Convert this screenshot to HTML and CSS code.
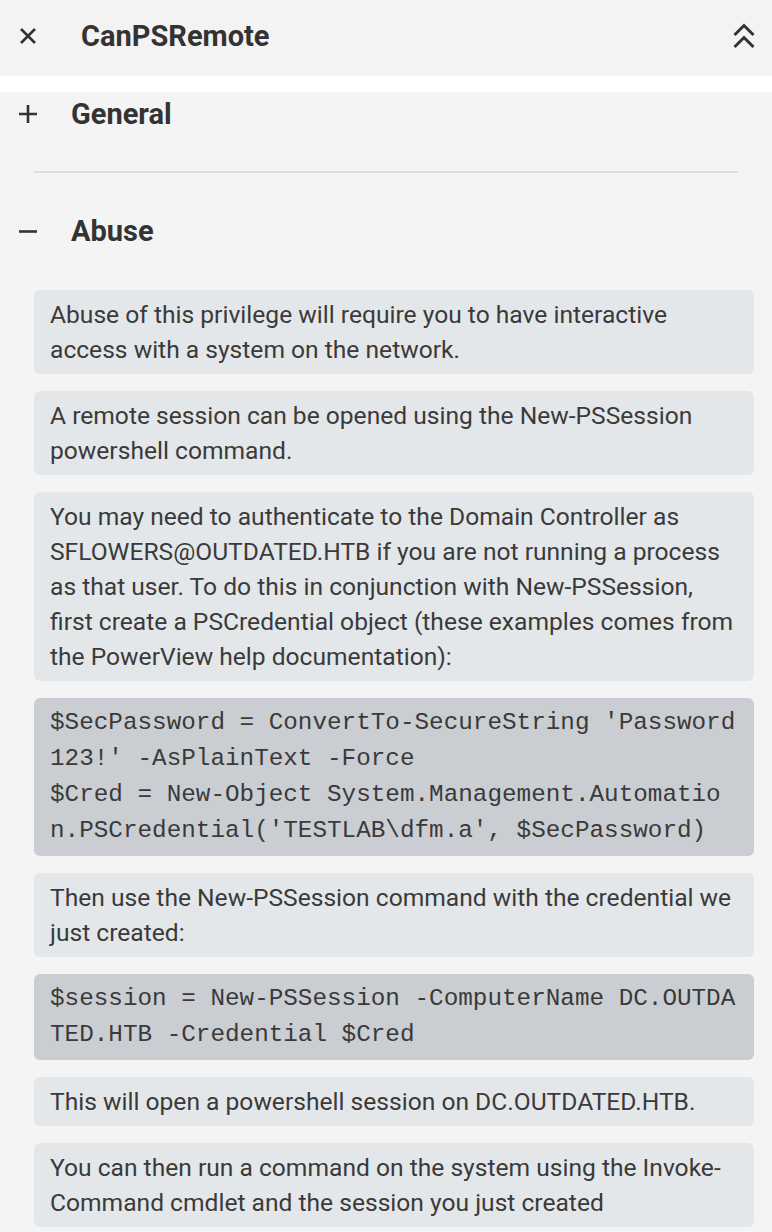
FILE: index.html
```html
<!DOCTYPE html>
<html lang="en">
<head>
<meta charset="utf-8">
<title>CanPSRemote</title>
<link rel="stylesheet" href="styles.css">
</head>
<body>
<header class="topbar">
  <svg class="icon icon-close" width="20" height="20" viewBox="0 0 20 20" aria-hidden="true">
    <path d="M3 3 L17 17 M17 3 L3 17" stroke="#333" stroke-width="2.6" fill="none" stroke-linecap="butt"/>
  </svg>
  <h1 class="title">CanPSRemote</h1>
  <svg class="icon icon-collapse" width="24" height="28" viewBox="0 0 24 28" aria-hidden="true">
    <path d="M2.5 13 L12 3.5 L21.5 13 M2.5 25 L12 15.5 L21.5 25" stroke="#333" stroke-width="3" fill="none"/>
  </svg>
</header>
<div class="gap-band"></div>
<main class="content">
  <div class="section-row">
    <svg class="icon icon-toggle" width="20" height="20" viewBox="0 0 20 20" aria-hidden="true">
      <path d="M10 1 V19 M1 10 H19" stroke="#333" stroke-width="2.6" fill="none"/>
    </svg>
    <h2 class="section-title">General</h2>
  </div>
  <hr class="divider">
  <div class="section-row section-row-open">
    <svg class="icon icon-toggle" width="20" height="20" viewBox="0 0 20 20" aria-hidden="true">
      <path d="M1 10.5 H19" stroke="#333" stroke-width="2.6" fill="none"/>
    </svg>
    <h2 class="section-title">Abuse</h2>
  </div>
  <div class="panel">
    <p class="note">Abuse of this privilege will require you to have interactive access with a system on the network.</p>
    <p class="note">A remote session can be opened using the New-PSSession powershell command.</p>
    <p class="note">You may need to authenticate to the Domain Controller as SFLOWERS@OUTDATED.HTB if you are not running a process as that user. To do this in conjunction with New-PSSession, first create a PSCredential object (these examples comes from the PowerView help documentation):</p>
    <pre class="code">$SecPassword = ConvertTo-SecureString 'Password
123!' -AsPlainText -Force
$Cred = New-Object System.Management.Automatio
n.PSCredential('TESTLAB\dfm.a', $SecPassword)</pre>
    <p class="note">Then use the New-PSSession command with the credential we just created:</p>
    <pre class="code">$session = New-PSSession -ComputerName DC.OUTDA
TED.HTB -Credential $Cred</pre>
    <p class="note">This will open a powershell session on DC.OUTDATED.HTB.</p>
    <p class="note">You can then run a command on the system using the Invoke-Command cmdlet and the session you just created</p>
  </div>
</main>
</body>
</html>
```
FILE: styles.css
```css
html, body {
  margin: 0;
  padding: 0;
}
body {
  width: 772px;
  height: 1232px;
  overflow: hidden;
  background: #f4f4f4;
  font-family: Roboto, "Liberation Sans", sans-serif;
  color: #333;
}
.topbar {
  height: 76px;
  background: #f3f3f3;
  display: flex;
  align-items: center;
  padding: 0 18px 0 18px;
  box-sizing: border-box;
}
.icon {
  display: block;
  flex: none;
}
.icon-close {
  margin-top: -4px;
}
.title {
  margin: -4px 0 0 43px;
  font-size: 29px;
  font-weight: 700;
  line-height: 1;
  flex: 1;
  color: #333;
}
.icon-collapse {
  margin-top: -4px;
  margin-right: -2px;
}
.gap-band {
  height: 16px;
  background: #ffffff;
}
.content {
  background: #f4f4f4;
  padding: 0 18px 0 0;
}
.section-row {
  height: 44px;
  display: flex;
  align-items: center;
  padding-left: 18px;
}
.section-title {
  margin: 0 0 0 33px;
  font-size: 29px;
  font-weight: 700;
  line-height: 1;
  color: #333;
}
.divider {
  margin: 35px 16px 0 34px;
  border: none;
  height: 2px;
  background: #dddddd;
}
.section-row-open {
  margin-top: 36px;
}
.panel {
  margin-top: 37px;
  padding-left: 34px;
  display: flex;
  flex-direction: column;
  gap: 17px;
}
.note {
  margin: 0;
  background: #e4e7ea;
  border-radius: 6px;
  padding: 7px 16px;
  font-size: 24.6px;
  line-height: 35px;
  color: #3a3a3a;
}
.code {
  margin: 0;
  background: #caced2;
  border-radius: 6px;
  padding: 7px 16px;
  font-family: "Liberation Mono", monospace;
  font-size: 24.3px;
  line-height: 36px;
  color: #3a3a3a;
  white-space: pre;
}
```
